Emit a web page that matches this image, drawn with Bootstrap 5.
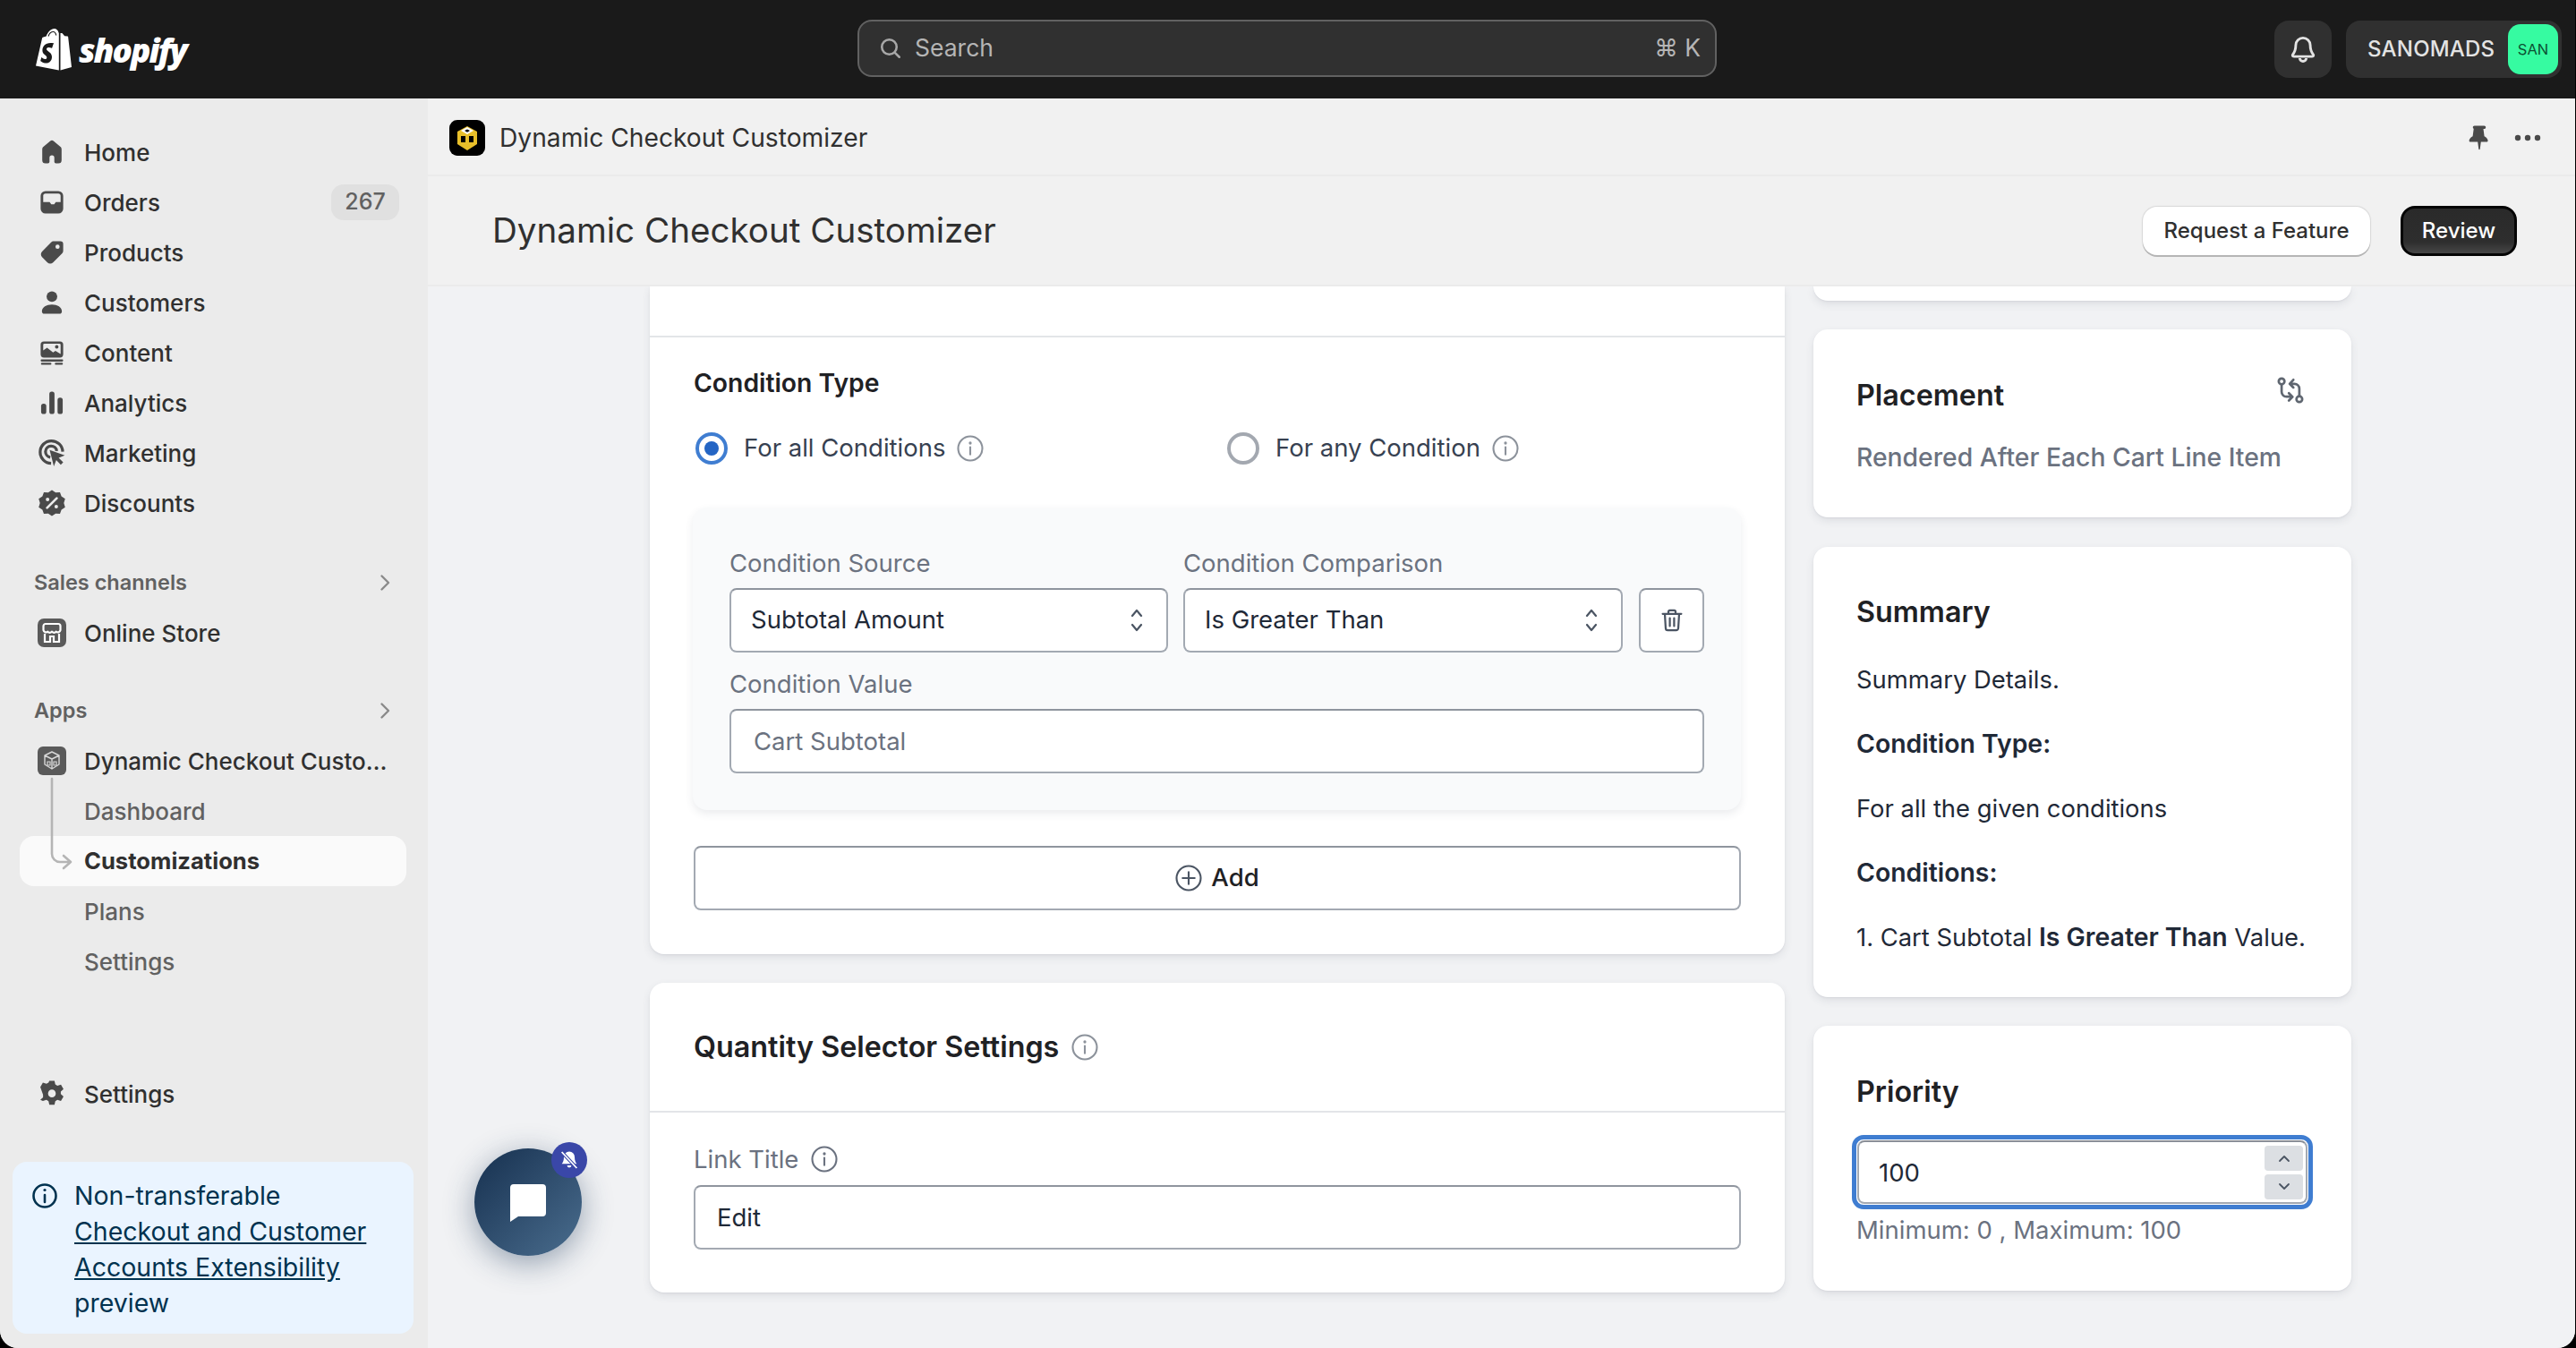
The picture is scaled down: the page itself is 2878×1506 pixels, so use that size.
<!DOCTYPE html>
<html lang="en">
<head>
<meta charset="utf-8">
<title>Dynamic Checkout Customizer</title>
<link href="https://cdn.jsdelivr.net/npm/bootstrap@5.3.0/dist/css/bootstrap.min.css" rel="stylesheet">
<style>
html,body{height:100%;margin:0;background:#000;overflow:hidden}
body{font-family:Inter,"Liberation Sans",sans-serif;color:#303030;font-size:26px}
.shell{height:1506px;width:2877px;background:#ebebeb;border-radius:0 0 20px 20px;overflow:hidden;position:relative}
.topbar{height:110px;background:#1a1a1a;padding:0 15px 0 38px;flex:none}
.brand{gap:6px;color:#fff}
.brand svg{flex:none}
.brand-word{font-family:"Open Sans",sans-serif;font-style:italic;font-weight:800;font-size:37px;letter-spacing:-2px;line-height:1}
.searchbox{position:absolute;left:958px;top:22px;width:960px;height:64px;background:#303030;border:2px solid #616161;border-radius:16px;padding:0 16px 0 20px;color:#b5b5b5;font-size:26.500px;gap:12px}
.top-btn{height:64px;background:#303030;border-radius:16px;color:#e3e3e3}
.bell-btn{width:64px}
.acct{width:241px;padding:0 4px 0 24px;font-size:24px;font-weight:500;letter-spacing:.2px}
.avatar-chip{width:56px;height:56px;border-radius:14px;background:#36fba1;color:#0c5132;font-size:16.500px;font-weight:400;letter-spacing:0}
.side{width:478px;flex:none;background:#ebebeb;padding-top:32px;padding-bottom:16px}
.nav-row{height:56px;margin:0 24px 0 22px;padding-left:18px;gap:18px;font-size:26px;font-weight:500;color:#303030;white-space:nowrap;text-decoration:none}
.nav-row svg{flex:none}
.ico{width:36px;height:36px;color:#4a4a4a}
.count-chip{margin-left:auto;margin-right:8px;width:76px;height:40px;border-radius:14px;background:#e0e0e0;color:#616161;font-size:25px;font-weight:450}
.sec-head{height:56px;margin:33px 24px 0 22px;padding:0 14px 0 16px;font-size:23.500px;font-weight:600;color:#616161}
.sec-apps{margin-top:31px}
.sub-row{font-weight:450;color:#616161;padding-left:72px}
.sub-on{background:#fafafa;border-radius:16px;font-weight:650;font-size:25.600px;color:#303030}
.tree-mark{position:absolute;left:28px;top:-66px;width:36px;height:110px;color:#b5b5b5}
.trunc{overflow:hidden;text-overflow:ellipsis;width:341px}
.notice{margin:48px 16px 0 14px;height:192px;background:#eaf4ff;border-radius:16px;padding:18px 20px 14px 22px;color:#00324f;font-size:28.500px;line-height:40px;gap:19px}
.notice svg{flex:none}
.notice a{color:#00324f}
.main-pane{background:#f1f2f4;min-width:0}
.appbar{height:87px;flex:none;background:#f1f1f1;padding:3px 38px 0 24px;border-bottom:2px solid #ebebeb}
.app-logo{width:40px;height:40px;background:#000;border-radius:9px;margin-right:16px}
.app-name{font-size:28.200px;color:#303030}
.app-tools{gap:21px}
.pagehead{height:123px;flex:none;background:#f1f1f1;padding:0 65px 0 72px;border-bottom:2px solid #ebebeb}
.page-title{font-size:38.600px;font-weight:400;margin:0;color:#303030}
.btn-light-x{height:54px;width:254px;background:#fff;border:0;border-radius:16px;box-shadow:0 2px 0 #b5b5b5,0 0 1px 1px #d8d8d8;color:#303030;font-size:24px;font-weight:500;padding:0}
.btn-dark-x{height:56px;width:130px;margin-left:34px;background:linear-gradient(#2a2a2a,#2e2e2e 75%,#474747);border:3px solid #050505;border-radius:16px;color:#fff;font-size:24px;font-weight:500;padding:0}
.content-area{overflow:hidden;padding-left:248px;gap:32px;min-height:0}
.left-col{width:1268px;flex:none;gap:32px}
.right-col{width:601px;flex:none;gap:32px}
.panel{background:#fff;border:0;border-radius:16px;box-shadow:0 4px 10px rgba(60,70,85,.1),0 1px 2px rgba(60,70,85,.08)}
.panel-cut{border-radius:0 0 16px 16px}
.stub-a{height:55px}
.rule{height:2px;background:#e3e5e8}
.pane-body{padding:32px 49px 49px}
.fld-title{font-size:28.300px;font-weight:600;color:#1f2124;line-height:38px}
.radio-row{height:44px;margin-top:32px}
.radio-item{gap:18px;font-size:27.500px;color:#374151}
.r-dot{width:36px;height:36px;border-radius:50%;border:4px solid #a3a8b0;flex:none;background:#fff;margin-left:2px}
.r-on{border-color:#3f7dd1;position:relative}
.r-on::after{content:"";position:absolute;left:6px;top:6px;width:16px;height:16px;border-radius:50%;background:#2465c4}
.radio-a{width:594px}
.i-ico{width:30px;height:30px;color:#8c929b;flex:none}
.radio-item .i-ico{margin-left:-5px}
.cond-box{margin:44px 0 0 -1px;height:338px;background:#f9fafb;border-radius:16px;padding:43px 41px 0;box-shadow:0 4px 10px rgba(60,70,85,.1)}
.lbl{font-size:27.500px;color:#6b7280;line-height:38px;margin:0;display:block}
.lbl-gap{margin-bottom:9px}
.lbl-val{margin-top:16px;margin-bottom:9px}
.ctl{height:72px;border:2px solid #a3a9b2;border-top-color:#8f959e;border-radius:8px;font-size:27.500px;color:#1f2937;padding:0 25px;box-shadow:none;background-color:#fff;font-family:inherit}
.ctl.form-select{padding-left:22px;background-image:url("data:image/svg+xml,%3Csvg xmlns='http://www.w3.org/2000/svg' viewBox='0 0 20 30'%3E%3Cpath d='M5 10l5-6 5 6M5 20l5 6 5-6' fill='none' stroke='%234b5563' stroke-width='2.2' stroke-linecap='round' stroke-linejoin='round'/%3E%3C/svg%3E");background-size:20px 30px;background-position:right 23px center;padding-right:50px}
.ctl::placeholder{color:#6b7280;opacity:1}
.sel-slot{width:490px;flex:none}
.sel-next{width:491px;margin-left:17px}
.trash-btn{width:73px;height:72px;flex:none;border:2px solid #a3a9b2;border-top-color:#8f959e;border-radius:8px;background:#fff;padding:0;margin-left:18px;color:#4b5563}
.add-btn{margin-top:40px;width:100%;height:72px;border:2px solid #a3a9b2;border-top-color:#8f959e;border-radius:8px;background:#fff;font-size:27.500px;font-weight:500;color:#1f2124;gap:10px;padding:0}
.q-head{height:143px;padding:0 49px;gap:14px}
.card-h{font-size:32.300px;font-weight:600;color:#1f2124;margin:0;line-height:40px}
.q-body{padding:33px 49px 48px}
.q-body .ctl{padding-left:24px}
.link-row{gap:14px;margin-bottom:10px}
.side-pad{padding:54px 50px 0 48px}
.stub-b{height:16px}
.place-card{height:210px}
.place-tool{margin-top:-4px}
.place-text{font-size:28.300px;font-weight:500;color:#6b7280;margin-top:30px;line-height:38px}
.sum-card{height:503px;margin-top:1px;padding-top:53px}
.sum-line{font-size:27.400px;color:#1f2937;line-height:38px;margin:0 0 34px}
.sum-strong{font-size:28.400px;font-weight:600}
.sum-b{font-size:28.400px;font-weight:600}
.sum-head{margin-bottom:36px}
.prio-card{height:296px}
.prio-shell{margin:28px 0 0 -5px;width:515px;height:83px;border:5px solid #3f7dd1;border-radius:13px;padding:1px;background:#fff;position:relative}
.prio-input{height:71px;width:100%;border:2px solid #a3a9b2;border-top-color:#8a8f98;font-size:27.500px;padding:0 22px}
.spin{position:absolute;right:6px;width:43px;height:28px;background:#dcdfe3;border:0;border-radius:4px;padding:0;color:#4b5563}
.spin-up{top:7px}
.spin-dn{top:39px}
.help-line{font-size:27.500px;color:#6b7280;line-height:38px;margin-top:4px}
.chat-fab{position:absolute;left:530px;top:1283px;width:120px;height:120px;border-radius:50%;background:linear-gradient(135deg,#16304f,#4a6d8e);box-shadow:0 8px 34px rgba(30,58,92,.45)}
.chat-bell{position:absolute;left:86px;top:-7px;width:40px;height:40px;border-radius:50%;background:#3a47a8}
</style>
</head>
<body>
<div class="shell d-flex flex-column">
  <header class="topbar d-flex align-items-center">
    <div class="brand d-flex align-items-center">
      <svg width="44" height="48" viewBox="0 0 44 48"><path fill="#fff" d="M27.500 5.600c-.6-3-2.600-4.600-4.800-4.600-3.800 0-7.300 3.700-9 8.600l-3.300 1c-1 .3-1.200.6-1.400 1.500L2 42.500 27.800 47.600 27.800 5.700z"/><path fill="#fff" d="M29.500 6l1.300.1c.4 0 .7.100 1 .5l2.400 2.700 3.300.2c.3 0 .5.200.6.500L42 44l-12.500 3.600z"/><path fill="#1a1a1a" d="M21.500 18.500l-1.400 4.200s-1.500-.8-3.300-.8c-2.700 0-2.800 1.700-2.800 2.100 0 2.300 6 3.200 6 8.600 0 4.300-2.700 7-6.300 7-4.300 0-6.500-2.700-6.500-2.700l1.100-3.800s2.300 2 4.200 2c1.300 0 1.800-1 1.800-1.700 0-3-4.900-3.100-4.900-8.100 0-4.200 3-8.200 9.100-8.200 2.300 0 3.800.4 3.800.4z"/><path fill="none" stroke="#1a1a1a" stroke-width="1.200" d="M16 9.500c1-3 3-5 5.500-5 1.600 0 2.800 1.500 3.200 4"/></svg>
      <span class="brand-word">shopify</span>
    </div>
    <div class="searchbox d-flex align-items-center">
      <svg width="30" height="30" viewBox="0 0 20 20" fill="none" stroke="#a8a8a8" stroke-width="1.700" stroke-linecap="round"><circle cx="9" cy="9" r="5.500"/><path d="M13.200 13.200l3.300 3.300"/></svg>
      <span>Search</span>
      <span class="ms-auto">⌘ K</span>
    </div>
    <div class="ms-auto d-flex gap-3 align-items-center">
      <div class="top-btn bell-btn d-flex align-items-center justify-content-center">
        <svg width="36" height="36" viewBox="0 0 20 20" fill="none" stroke="#e3e3e3" stroke-width="1.600" stroke-linejoin="round"><path d="M10 3a4.500 4.500 0 0 0-4.500 4.500c0 3.500-1 4.800-2 6 0 .6.300 1 1 1h11c.7 0 1-.4 1-1-1-1.200-2-2.500-2-6A4.500 4.500 0 0 0 10 3z"/><path d="M8 15.500a2 2 0 0 0 4 0"/></svg>
      </div>
      <div class="top-btn acct d-flex align-items-center justify-content-between">
        <span>SANOMADS</span>
        <span class="avatar-chip d-flex align-items-center justify-content-center">SAN</span>
      </div>
    </div>
  </header>

  <div class="d-flex flex-grow-1" style="min-height:0">
    <aside class="side d-flex flex-column">
      <a class="nav-row d-flex align-items-center"><svg class="ico" viewBox="0 0 20 20" fill="currentColor"><path d="M9 3.100a1.600 1.600 0 0 1 2 0l4.300 3.600c.5.400.7 1 .7 1.600V15a2 2 0 0 1-2 2h-1.500a1 1 0 0 1-1-1v-2.500a1.500 1.500 0 0 0-3 0V16a1 1 0 0 1-1 1H6a2 2 0 0 1-2-2V8.300c0-.6.200-1.200.7-1.600z"/></svg>Home</a>
      <a class="nav-row d-flex align-items-center"><svg class="ico" viewBox="0 0 20 20" fill="currentColor"><path fill-rule="evenodd" d="M6 3h8a3 3 0 0 1 3 3v8a3 3 0 0 1-3 3H6a3 3 0 0 1-3-3V6a3 3 0 0 1 3-3zM4.600 9.800V6c0-.8.600-1.400 1.400-1.400h8c.8 0 1.400.6 1.400 1.400v3.800h-3l-1 1.400h-1.800L8.600 9.800z"/></svg>Orders<span class="count-chip d-flex align-items-center justify-content-center">267</span></a>
      <a class="nav-row d-flex align-items-center"><svg class="ico" viewBox="0 0 20 20" fill="currentColor"><path fill-rule="evenodd" d="M11 3h4.200A1.800 1.800 0 0 1 17 4.800V9c0 .6-.2 1.100-.6 1.500l-5.700 5.700a2.500 2.500 0 0 1-3.500 0l-3.300-3.300a2.500 2.500 0 0 1 0-3.500l5.600-5.700c.4-.4 1-.7 1.500-.7zM13.500 5.200a1.300 1.300 0 1 0 0 2.600 1.300 1.300 0 0 0 0-2.600z"/></svg>Products</a>
      <a class="nav-row d-flex align-items-center"><svg class="ico" viewBox="0 0 20 20" fill="currentColor"><circle cx="10" cy="6.300" r="3.300"/><path d="M3.800 15.500c0-2.600 2.800-4.300 6.200-4.300s6.200 1.700 6.200 4.300c0 .9-.7 1.500-1.500 1.500H5.300c-.8 0-1.500-.6-1.500-1.500z"/></svg>Customers</a>
      <a class="nav-row d-flex align-items-center"><svg class="ico" viewBox="0 0 20 20" fill="currentColor"><path fill-rule="evenodd" d="M5 3h10a2 2 0 0 1 2 2v6a2 2 0 0 1-2 2H5a2 2 0 0 1-2-2V5a2 2 0 0 1 2-2zM4.600 8.600l2.400-1.600 3.700 2.900 1.500-1 3.200 2v-6A.8.8 0 0 0 14.600 4.400H5.400a.8.8 0 0 0-.8.500zM13 5.300a1.100 1.100 0 1 0 0 2.200 1.100 1.100 0 0 0 0-2.200z"/><rect x="3" y="14.200" width="14" height="1.300" rx=".6"/><rect x="3.200" y="16.300" width="6.500" height="1.200" rx=".6"/><rect x="11.800" y="16.300" width="5" height="1.200" rx=".6"/></svg>Content</a>
      <a class="nav-row d-flex align-items-center"><svg class="ico" viewBox="0 0 20 20" fill="currentColor"><rect x="3.300" y="10.500" width="3.200" height="6.500" rx="1.500"/><rect x="8.400" y="3" width="3.200" height="14" rx="1.500"/><rect x="13.500" y="6.800" width="3.200" height="10.200" rx="1.500"/></svg>Analytics</a>
      <a class="nav-row d-flex align-items-center"><svg class="ico" viewBox="0 0 20 20" fill="none" stroke="currentColor" stroke-width="1.800"><path d="M9.500 16.500a7 7 0 1 1 7.200-7.300M9 12.700A3.500 3.500 0 1 1 13 8.800"/><path fill="currentColor" stroke="none" d="M8.600 8.200l9.400 3.300-3.800 1.500 2.800 2.800-1.500 1.500-2.800-2.800-1.500 3.800z"/></svg>Marketing</a>
      <a class="nav-row d-flex align-items-center"><svg class="ico" viewBox="0 0 20 20"><path fill="currentColor" d="M10 2l2.300 1.500 2.700-.2.900 2.600 2.300 1.500-.8 2.600.8 2.600-2.300 1.500-.9 2.600-2.700-.2L10 18l-2.300-1.500-2.700.2-.9-2.600-2.300-1.500.8-2.600-.8-2.600 2.300-1.500.9-2.600 2.700.2z"/><path d="M7 13l6-6" stroke="#ebebeb" stroke-width="1.500" stroke-linecap="round"/><circle cx="7.300" cy="7.800" r="1.100" fill="#ebebeb"/><circle cx="12.700" cy="12.200" r="1.100" fill="#ebebeb"/></svg>Discounts</a>

      <div class="sec-head d-flex align-items-center justify-content-between"><span>Sales channels</span><svg width="20" height="20" viewBox="0 0 20 20" fill="none" stroke="#8a8a8a" stroke-width="2.400" stroke-linecap="round" stroke-linejoin="round"><path d="M6.500 2.500L14 10l-7.500 7.500"/></svg></div>
      <a class="nav-row d-flex align-items-center"><svg class="ico" viewBox="0 0 36 36"><rect x="2" y="2" width="32" height="32" rx="7" fill="#5a5a5a"/><path d="M11 8h14c1.500 0 2.500 1 2.500 2.500V15a3 3 0 0 1-4.700 1.800 3.500 3.500 0 0 1-4.800 0 3.500 3.500 0 0 1-4.800 0A3 3 0 0 1 8.500 15v-4.500C8.500 9 9.500 8 11 8z" fill="none" stroke="#fff" stroke-width="2.200"/><path d="M10 19v9h6v-6h4v6h6v-9" fill="none" stroke="#fff" stroke-width="2.200"/></svg>Online Store</a>

      <div class="sec-head sec-apps d-flex align-items-center justify-content-between"><span>Apps</span><svg width="20" height="20" viewBox="0 0 20 20" fill="none" stroke="#8a8a8a" stroke-width="2.400" stroke-linecap="round" stroke-linejoin="round"><path d="M6.500 2.500L14 10l-7.500 7.500"/></svg></div>
      <a class="nav-row d-flex align-items-center"><svg class="ico" viewBox="0 0 36 36"><rect x="2" y="2" width="32" height="32" rx="6" fill="#5a5a5a"/><path d="M18 8l8 4v10l-8 5-8-5V12zM10 12l8 4 8-4M18 16v11" fill="none" stroke="#d8d8d8" stroke-width="1.400" stroke-linejoin="round"/><path d="M13 19h3v4h-3zM20 19h3v4h-3z" fill="none" stroke="#d8d8d8" stroke-width="1.200"/></svg><span class="trunc">Dynamic Checkout Customizer</span></a>
      <a class="nav-row sub-row d-flex align-items-center">Dashboard</a>
      <a class="nav-row sub-row sub-on d-flex align-items-center position-relative"><svg class="tree-mark" viewBox="0 0 36 110" fill="none" stroke="currentColor" stroke-width="2.600" stroke-linecap="round" stroke-linejoin="round"><path d="M8 2v84a9 9 0 0 0 9 9h12M21 88l8 7-8 7"/></svg>Customizations</a>
      <a class="nav-row sub-row d-flex align-items-center">Plans</a>
      <a class="nav-row sub-row d-flex align-items-center">Settings</a>

      <a class="nav-row d-flex align-items-center mt-auto"><svg class="ico" viewBox="0 0 20 20" fill="currentColor"><path fill-rule="evenodd" d="M8.400 2.200h3.200l.5 2.200 1.300.8 2.200-.7 1.600 2.800-1.700 1.500v1.600l1.700 1.500-1.600 2.800-2.200-.7-1.300.8-.5 2.200H8.400l-.5-2.200-1.300-.8-2.200.7L2.800 13.900l1.700-1.500v-1.600L2.800 6.100l1.600-2.800 2.200.7 1.300-.8zM10 7.600a2.400 2.400 0 1 0 0 4.800 2.400 2.400 0 0 0 0-4.800z" transform="translate(0 -.2)"/></svg>Settings</a>
      <div class="notice d-flex flex-shrink-0">
        <svg width="28" height="40" viewBox="0 0 28 40" fill="none" stroke="#00324f" stroke-width="2.600"><circle cx="14" cy="20" r="12.500"/><path d="M14 19v8" stroke-linecap="round"/><circle cx="14" cy="13.500" r="1.600" fill="#00324f" stroke="none"/></svg>
        <div>Non-transferable <a href="#">Checkout and Customer Accounts Extensibility</a> preview</div>
      </div>
    </aside>

    <main class="main-pane flex-grow-1 d-flex flex-column">
      <div class="appbar d-flex align-items-center">
        <span class="app-logo d-flex align-items-center justify-content-center"><svg width="26" height="30" viewBox="0 0 26 30"><path d="M13 2l11 6v14l-11 7-11-7V8z" fill="#e8bf2a"/><path d="M13 3l7 4-7 4-7-4z" fill="#fff"/><path d="M13 5.500l3 1.600-3 1.600-3-1.600z" fill="#000"/><path d="M6 13h5v7H6zM15 13h5v7h-5z" fill="#000"/></svg></span>
        <span class="app-name">Dynamic Checkout Customizer</span>
        <span class="app-tools ms-auto d-flex align-items-center">
          <svg width="36" height="36" viewBox="0 0 20 20" fill="#4a4a4a"><path d="M7 2.500h6c.6 0 1 .4 1 1s-.4 1-1 1h-.5l.6 4.500c1 .5 1.900 1.300 2.200 2.500.1.500-.2 1-.8 1H11l-.6 4.500c-.1.400-.7.400-.8 0L9 12.500H4.500c-.6 0-.9-.5-.8-1 .3-1.200 1.200-2 2.200-2.500l.6-4.500H7c-.6 0-1-.4-1-1s.4-1 1-1z"/></svg>
          <svg width="30" height="10" viewBox="0 0 30 10" fill="#4a4a4a"><circle cx="4" cy="5" r="3.200"/><circle cx="15" cy="5" r="3.200"/><circle cx="26" cy="5" r="3.200"/></svg>
        </span>
      </div>
      <div class="pagehead d-flex align-items-center">
        <h1 class="page-title">Dynamic Checkout Customizer</h1>
        <button class="btn btn-light-x ms-auto">Request a Feature</button>
        <button class="btn btn-dark-x">Review</button>
      </div>
      <div class="content-area d-flex flex-grow-1">
        <div class="left-col d-flex flex-column">
          <section class="panel panel-cut">
            <div class="stub-a"></div>
            <div class="rule"></div>
            <div class="pane-body">
              <div class="fld-title">Condition Type</div>
              <div class="radio-row d-flex align-items-center">
                <div class="radio-item radio-a d-flex align-items-center"><span class="r-dot r-on"></span><span>For all Conditions</span>
                  <svg class="i-ico" viewBox="0 0 20 20" fill="none" stroke="currentColor" stroke-width="1.400"><circle cx="10" cy="10" r="9"/><path d="M10 9v5.500" stroke-linecap="round"/><circle cx="10" cy="6" r="1.100" fill="currentColor" stroke="none"/></svg></div>
                <div class="radio-item d-flex align-items-center"><span class="r-dot"></span><span>For any Condition</span>
                  <svg class="i-ico" viewBox="0 0 20 20" fill="none" stroke="currentColor" stroke-width="1.400"><circle cx="10" cy="10" r="9"/><path d="M10 9v5.500" stroke-linecap="round"/><circle cx="10" cy="6" r="1.100" fill="currentColor" stroke="none"/></svg></div>
              </div>
              <div class="cond-box">
                <div class="d-flex align-items-end">
                  <div class="sel-slot"><label class="lbl lbl-gap">Condition Source</label><select class="form-select ctl"><option>Subtotal Amount</option></select></div>
                  <div class="sel-slot sel-next"><label class="lbl lbl-gap">Condition Comparison</label><select class="form-select ctl"><option>Is Greater Than</option></select></div>
                  <button class="btn trash-btn d-flex align-items-center justify-content-center"><svg width="32" height="32" viewBox="0 0 20 20" fill="none" stroke="currentColor" stroke-width="1.400" stroke-linecap="round" stroke-linejoin="round"><path d="M3.500 5.500h13M7.500 5.500V4a1 1 0 0 1 1-1h3a1 1 0 0 1 1 1v1.500M5 5.500l.6 10a1.500 1.500 0 0 0 1.500 1.500h5.800a1.500 1.500 0 0 0 1.500-1.500l.6-10M8.500 8.500v5.500M11.500 8.500v5.500"/></svg></button>
                </div>
                <label class="lbl lbl-val">Condition Value</label>
                <input class="form-control ctl" placeholder="Cart Subtotal">
              </div>
              <button class="btn add-btn d-flex align-items-center justify-content-center"><svg width="30" height="30" viewBox="0 0 20 20" fill="none" stroke="#4b5563" stroke-width="1.400" stroke-linecap="round"><circle cx="10" cy="10" r="9"/><path d="M10 5.500v9M5.500 10h9"/></svg>Add</button>
            </div>
          </section>
          <section class="panel">
            <div class="q-head d-flex align-items-center"><h2 class="card-h">Quantity Selector Settings</h2>
              <svg class="i-ico" viewBox="0 0 20 20" fill="none" stroke="currentColor" stroke-width="1.400"><circle cx="10" cy="10" r="9"/><path d="M10 9v5.500" stroke-linecap="round"/><circle cx="10" cy="6" r="1.100" fill="currentColor" stroke="none"/></svg></div>
            <div class="rule"></div>
            <div class="q-body">
              <div class="link-row d-flex align-items-center"><span class="lbl">Link Title</span><svg class="i-ico" viewBox="0 0 20 20" fill="none" stroke="#6b7280" stroke-width="1.400"><circle cx="10" cy="10" r="9"/><path d="M10 9v5.500" stroke-linecap="round"/><circle cx="10" cy="6" r="1.100" fill="#6b7280" stroke="none"/></svg></div>
              <input class="form-control ctl" value="Edit">
            </div>
          </section>
        </div>
        <div class="right-col d-flex flex-column">
          <section class="panel panel-cut stub-b"></section>
          <section class="panel side-pad place-card">
            <div class="d-flex justify-content-between align-items-start"><h2 class="card-h">Placement</h2>
              <svg class="place-tool" width="36" height="36" viewBox="0 0 20 20" fill="none" stroke="#5f6670" stroke-width="1.500" stroke-linecap="round" stroke-linejoin="round"><circle cx="4.500" cy="4.500" r="1.800"/><circle cx="15.500" cy="15.500" r="1.800"/><path d="M4.500 6.300V11a3 3 0 0 0 3 3H11M9 11.800l2.300 2.300L9 16.400M15.500 13.700V9a3 3 0 0 0-3-3H9.500M11.800 3.500L9.500 6l2.300 2.300"/></svg></div>
            <div class="place-text">Rendered After Each Cart Line Item</div>
          </section>
          <section class="panel side-pad sum-card">
            <h2 class="card-h sum-head">Summary</h2>
            <p class="sum-line">Summary Details.</p>
            <p class="sum-line sum-strong">Condition Type:</p>
            <p class="sum-line">For all the given conditions</p>
            <p class="sum-line sum-strong">Conditions:</p>
            <p class="sum-line">1. Cart Subtotal <b class="sum-b">Is Greater Than</b> Value.</p>
          </section>
          <section class="panel side-pad prio-card">
            <h2 class="card-h">Priority</h2>
            <div class="prio-shell">
              <input class="form-control ctl prio-input" value="100">
              <button class="btn spin spin-up d-flex align-items-center justify-content-center" aria-label="up"><svg width="16" height="10" viewBox="0 0 16 10" fill="none" stroke="currentColor" stroke-width="1.800" stroke-linecap="round" stroke-linejoin="round"><path d="M3 8l5-5 5 5"/></svg></button>
              <button class="btn spin spin-dn d-flex align-items-center justify-content-center" aria-label="down"><svg width="16" height="10" viewBox="0 0 16 10" fill="none" stroke="currentColor" stroke-width="1.800" stroke-linecap="round" stroke-linejoin="round"><path d="M3 2l5 5 5-5"/></svg></button>
            </div>
            <div class="help-line">Minimum: 0 , Maximum: 100</div>
          </section>
        </div>
      </div>
    </main>
  </div>

  <div class="chat-fab d-flex align-items-center justify-content-center">
    <svg width="44" height="44" viewBox="0 0 44 44"><path fill="#fff" d="M6 2h32a4 4 0 0 1 4 4v28a4 4 0 0 1-4 4H11l-9 6V6a4 4 0 0 1 4-4z"/></svg>
    <span class="chat-bell d-flex align-items-center justify-content-center"><svg width="24" height="24" viewBox="0 0 20 20"><path fill="#fff" d="M10 2a5 5 0 0 0-5 5c0 3.500-.8 5-2 6.500h14C15.800 12 15 10.500 15 7a5 5 0 0 0-5-5zM8 15h4a2 2 0 0 1-4 0z"/><path d="M3 2.500l14 15" stroke="#3a47a8" stroke-width="3.200"/><path d="M3 2.500l14 15" stroke="#fff" stroke-width="1.500"/></svg></span>
  </div>
</div>
<script src="https://cdn.jsdelivr.net/npm/bootstrap@5.3.0/dist/js/bootstrap.bundle.min.js"></script>
</body>
</html>
